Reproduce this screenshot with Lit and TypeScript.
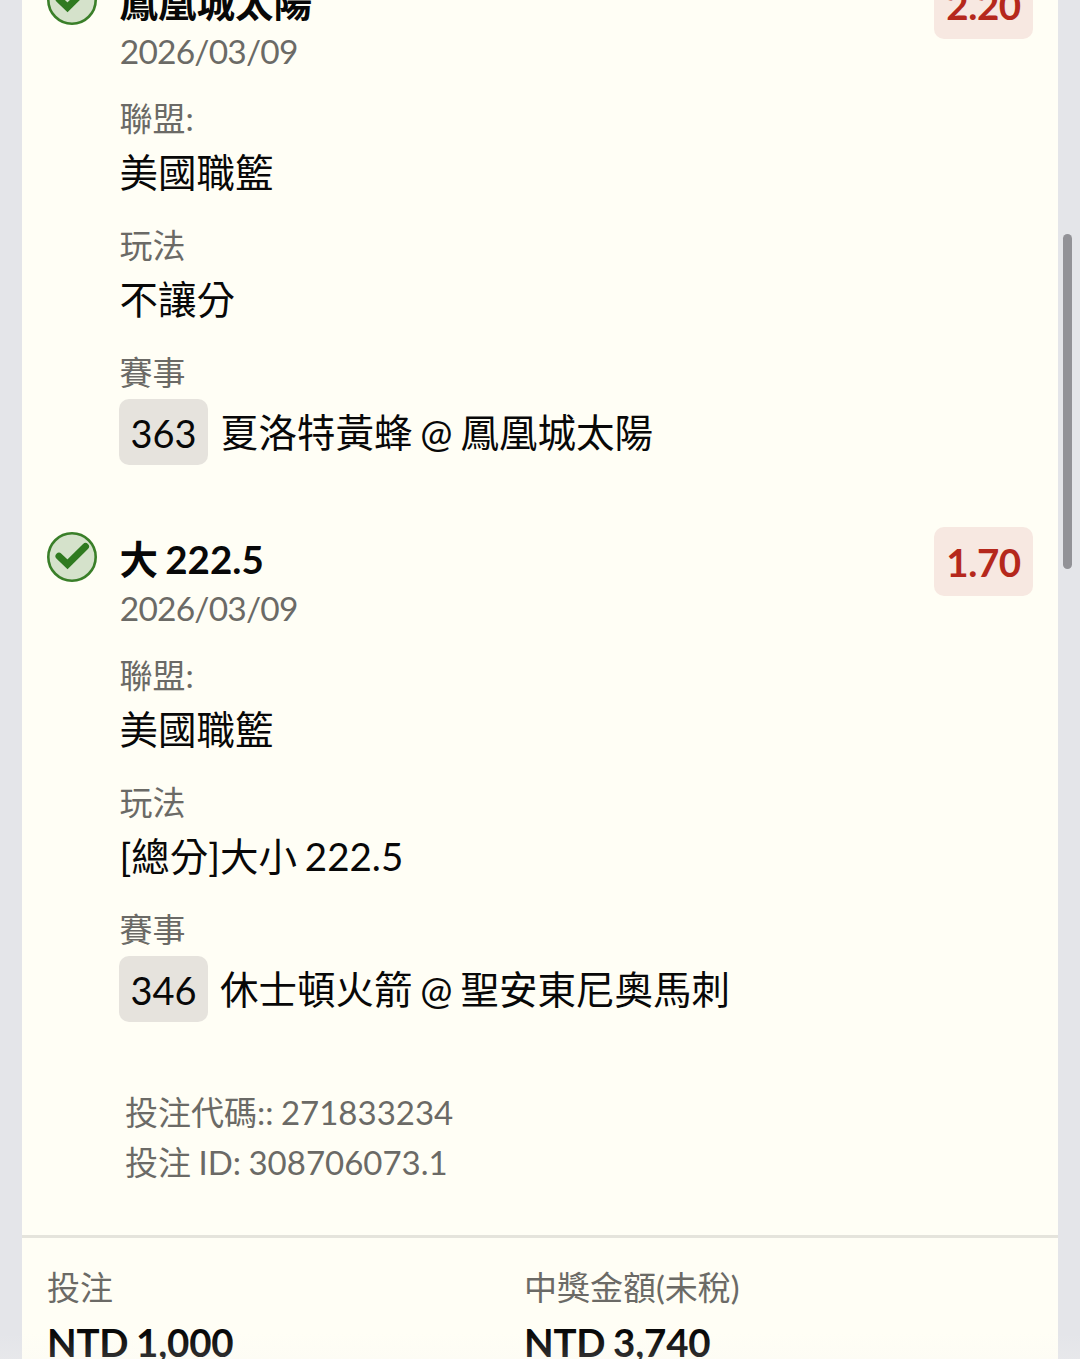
import { LitElement, html, css } from "lit";
import { customElement, property } from "lit/decorators.js";

interface Leg {
  pick: string;
  odds: string;
  date: string;
  league: string;
  market: string;
  code: string;
  match: string;
}

const LEGS: Leg[] = [
  { pick: "鳳凰城太陽", odds: "2.20", date: "2026/03/09", league: "美國職籃", market: "不讓分", code: "363", match: "夏洛特黃蜂 @ 鳳凰城太陽" },
  { pick: "大 222.5", odds: "1.70", date: "2026/03/09", league: "美國職籃", market: "[總分]大小 222.5", code: "346", match: "休士頓火箭 @ 聖安東尼奧馬刺" },
];

@customElement("bet-leg")
export class BetLeg extends LitElement {
  @property({ attribute: false }) leg!: Leg;

  static styles = css`
    :host { display: grid; grid-template-columns: 72.4px 1fr auto; height: 557px; box-sizing: border-box; padding: 0 25px; align-items: start; word-spacing: -2px; }
    .mark { width: 50px; height: 50px; margin-top: 5px; display: block; }
    .pick { font-size: 38.5px; font-weight: 700; line-height: 52px; height: 56px; padding-top: 6px; box-sizing: border-box; white-space: nowrap; }
    .date { font-size: 33.5px; line-height: 50px; height: 67px; color: #6b6a66; letter-spacing: -0.8px; padding-left: 0.4px; }
    .label { font-size: 33px; line-height: 50px; height: 50px; color: #6b6a66; }
    .value { font-size: 38.5px; line-height: 59px; height: 77px; white-space: nowrap; }
    .match { display: flex; align-items: center; gap: 12px; font-size: 38.5px; line-height: 64px; white-space: nowrap; }
    .teams { padding-top: 2px; }
    .code { width: 89px; height: 66px; line-height: 68px; margin: 2px 0 0 -0.4px; border-radius: 10px; background: #e6e3dd; text-align: center; font-size: 38px; }
    .odds { width: 99px; height: 69px; line-height: 70px; border-radius: 10px; background: #f7e8e1; color: #b5281c; text-align: center; font-weight: 700; font-size: 38.5px; letter-spacing: -0.4px; }
  `;

  render() {
    const l = this.leg;
    return html`
      <svg class="mark" viewBox="0 0 50 50">
        <circle cx="25" cy="25" r="23.7" fill="#d5e2cb" stroke="#3a7f29" stroke-width="2.6" />
        <path d="M12 24.2 L20.5 32.3 L38.5 14.5" fill="none" stroke="#2f7a20" stroke-width="7" stroke-linecap="round" />
      </svg>
      <div>
        <div class="pick">${l.pick}</div>
        <div class="date">${l.date}</div>
        <div class="label">聯盟:</div>
        <div class="value">${l.league}</div>
        <div class="label">玩法</div>
        <div class="value">${l.market}</div>
        <div class="label">賽事</div>
        <div class="match"><span class="code">${l.code}</span><span class="teams">${l.match}</span></div>
      </div>
      <div class="odds">${l.odds}</div>
    `;
  }
}

@customElement("app-root")
export class AppRoot extends LitElement {
  static styles = css`
    :host { display: flex; position: relative; height: 1359px; overflow: hidden; background: #e4e5e9; font-family: Lato, "Noto Sans CJK TC", sans-serif; color: #080808; }
    .ticket { width: 1036px; margin-left: 22px; background: #fffef5; flex: none; }
    .legs { margin-top: -30px; }
    .ids { padding: 3px 0 0 103px; height: 151px; font-size: 33px; line-height: 50px; color: #6b6a66; box-sizing: border-box; word-spacing: -1px; }
    .totals { border-top: 3px solid #e5e4dc; display: grid; grid-template-columns: 477px 1fr; padding: 24px 25px 0; }
    .label { font-size: 33px; line-height: 50px; color: #6b6a66; }
    .amount { font-size: 38.5px; line-height: 60px; font-weight: 700; letter-spacing: -0.2px; word-spacing: -1.5px; }
    .thumb { width: 9px; height: 335px; margin: 234px 0 0 5px; border-radius: 5px; background: #929297; }
    .fade { position: absolute; left: 0; right: 0; bottom: 0; height: 26px; background: linear-gradient(rgba(244, 243, 242, 0), rgba(244, 243, 242, 0.18)); }
  `;

  render() {
    return html`
      <main class="ticket">
        <div class="legs">${LEGS.map((l) => html`<bet-leg .leg=${l}></bet-leg>`)}</div>
        <div class="ids"><div>投注代碼:: 271833234</div><div>投注 ID: 308706073.1</div></div>
        <div class="totals">
          <div><div class="label">投注</div><div class="amount">NTD 1,000</div></div>
          <div><div class="label">中獎金額(未稅)</div><div class="amount">NTD 3,740</div></div>
        </div>
      </main>
      <div class="thumb"></div>
      <div class="fade"></div>
    `;
  }
}
